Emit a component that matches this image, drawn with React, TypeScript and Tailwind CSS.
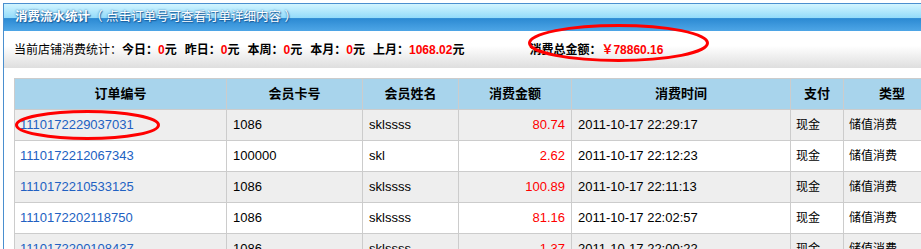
const rows = [
  { id: '1110172229037031', card: '1086', name: 'sklssss', amount: '80.74', time: '2011-10-17 22:29:17' },
  { id: '1110172212067343', card: '100000', name: 'skl', amount: '2.62', time: '2011-10-17 22:12:23' },
  { id: '1110172210533125', card: '1086', name: 'sklssss', amount: '100.89', time: '2011-10-17 22:11:13' },
  { id: '1110172202118750', card: '1086', name: 'sklssss', amount: '81.16', time: '2011-10-17 22:02:57' },
  { id: '1110172200108437', card: '1086', name: 'sklssss', amount: '1.37', time: '2011-10-17 22:00:22' },
];

const headers = ['订单编号', '会员卡号', '会员姓名', '消费金额', '消费时间', '支付', '类型'];

const font = 'font-["Liberation_Sans","Noto_Sans_CJK_SC",sans-serif]';
const cell = 'border border-[#cccccc] whitespace-nowrap';

const Stat = ({ label, value }: { label: string; value: string }) => (
  <span className="font-bold">
    {label}：<span className="text-[#ff0000]">{value}</span>元
  </span>
);

export default function App() {
  return (
    <div className={`relative w-[921px] h-[249px] overflow-hidden bg-white ${font}`}>
      <div className="ml-[3px] mt-[3px] w-[960px] border border-[#4a8fcf] border-b-0">
        {/* title bar */}
        <div className="h-[27px] flex items-center pl-[11px] text-white text-[12.5px] bg-[linear-gradient(#d2f5ff_0%,#95dcfa_50%,#2c8ad3_54%,#4ea6e6_100%)] [text-shadow:0_0_2px_#1b5f9e,1px_1px_1px_#1b5f9e]">
          <span className="font-bold">消费流水统计</span>
          <span>（ 点击订单号可查看订单详细内容 ）</span>
        </div>

        {/* stats */}
        <div className="h-[37px] flex items-center pl-[10px] text-[12px] text-black bg-[linear-gradient(#ffffff_0%,#ffffff_40%,#dedede_100%)]">
          <span>当前店铺消费统计：</span>
          <Stat label="今日" value="0" />
          <span className="ml-[8px]"><Stat label="昨日" value="0" /></span>
          <span className="ml-[8px]"><Stat label="本周" value="0" /></span>
          <span className="ml-[8px]"><Stat label="本月" value="0" /></span>
          <span className="ml-[8px]"><Stat label="上月" value="1068.02" /></span>
          <span className="ml-[65px] font-bold">
            消费总金额：<span className="text-[#ff0000]">￥78860.16</span>
          </span>
        </div>

        {/* table */}
        <div className="pt-[10px] pl-[10px]">
          <table className="table-fixed border-collapse w-[926px] text-[13px]">
            <colgroup>
              <col className="w-[212px]" />
              <col className="w-[136px]" />
              <col className="w-[96px]" />
              <col className="w-[113px]" />
              <col className="w-[219px]" />
              <col className="w-[53px]" />
              <col className="w-[97px]" />
            </colgroup>
            <thead>
              <tr className="bg-[#a8d4ec] h-[31px]">
                {headers.map((h) => (
                  <th key={h} className={`${cell} font-bold text-center`}>{h}</th>
                ))}
              </tr>
            </thead>
            <tbody>
              {rows.map((r, i) => (
                <tr key={r.id} className={`h-[31px] ${i % 2 === 0 ? 'bg-[#eeeeee]' : 'bg-white'}`}>
                  <td className={`${cell} px-[5px] text-[#2161c2]`}>{r.id}</td>
                  <td className={`${cell} px-[6px]`}>{r.card}</td>
                  <td className={`${cell} px-[6px]`}>{r.name}</td>
                  <td className={`${cell} px-[6px] text-right text-[#ff0000]`}>{r.amount}</td>
                  <td className={`${cell} px-[6px]`}>{r.time}</td>
                  <td className={`${cell} px-[5px] text-[12px]`}>现金</td>
                  <td className={`${cell} px-[5px] text-[12px]`}>储值消费</td>
                </tr>
              ))}
            </tbody>
          </table>
        </div>
      </div>

      {/* red annotation ellipses */}
      <svg className="absolute left-0 top-0 pointer-events-none" width="921" height="249">
        <ellipse cx="87.5" cy="125" rx="71" ry="13.5" fill="none" stroke="#ff0000" strokeWidth="3" />
        <ellipse cx="618.5" cy="43" rx="89" ry="17.5" fill="none" stroke="#ff0000" strokeWidth="3" />
      </svg>
    </div>
  );
}
